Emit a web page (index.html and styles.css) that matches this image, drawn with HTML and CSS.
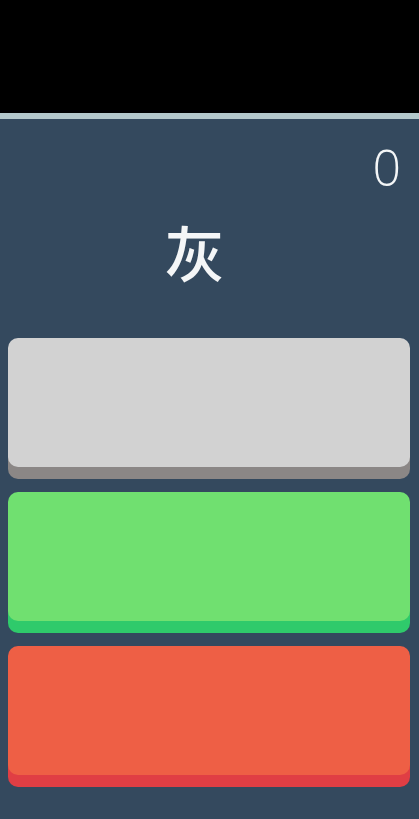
FILE: index.html
```html
<!DOCTYPE html>
<html>
<head>
  <meta charset="UTF-8">
  <title>Color Word</title>
  <link rel="stylesheet" href="styles.css">
</head>
<body>
  <div class="top-space"></div>

  <div class="game">
    <div class="score">0</div>
    <div class="word">灰</div>

    <div class="choices">
      <button type="button" class="choice gray"></button>
      <button type="button" class="choice green"></button>
      <button type="button" class="choice red"></button>
    </div>
  </div>
</body>
</html>
```

FILE: styles.css
```css
:root {
  --bg: #34495e;
  --line: #b3c7cb;
  --text: #f4f6f7;
}

html, body {
  height: 100%;
}

body {
  margin: 0;
  background: #000;
  font-family: 'Open Sans', 'Noto Sans CJK SC', sans-serif;
  display: flex;
  flex-direction: column;
}

.top-space {
  height: 113px;
  flex: none;
}

.game {
  flex: 1;
  background: var(--bg);
  border-top: 6px solid var(--line);
  padding: 0 9px 0 8px;
  display: flex;
  flex-direction: column;
}

.score {
  align-self: flex-end;
  margin-top: 23px;
  margin-right: 9px;
  font-size: 50px;
  font-weight: 300;
  line-height: 1;
  color: var(--text);
}

.word {
  margin-top: 29px;
  padding-right: 29px;
  text-align: center;
  font-family: 'Noto Sans CJK SC', sans-serif;
  font-size: 60px;
  font-weight: 500;
  line-height: 1;
  color: var(--text);
}

.choices {
  margin-top: 57px;
  display: flex;
  flex-direction: column;
  gap: 25px;
}

.choice {
  height: 129px;
  border: none;
  border-radius: 10px;
  padding: 0;
  cursor: pointer;
}

.gray { background: #d2d2d2; box-shadow: 0 12px 0 #8b8786; }
.green { background: #70e070; box-shadow: 0 12px 0 #2fca6b; }
.red { background: #ee5f45; box-shadow: 0 12px 0 #e03e44; }
```
